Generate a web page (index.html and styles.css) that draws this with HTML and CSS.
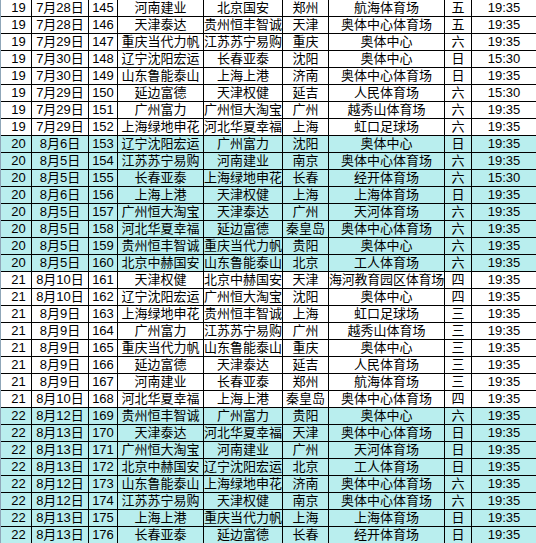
FILE: index.html
```html
<!DOCTYPE html>
<html lang="zh-CN">
<head>
<meta charset="utf-8">
<title>赛程表</title>
<link rel="stylesheet" href="styles.css">
</head>
<body>
<div class="sheet">
  <div class="row"><span class="c1">19</span><span>7月28日</span><span>145</span><span>河南建业</span><span>北京国安</span><span>郑州</span><span>航海体育场</span><span>五</span><span>19:35</span></div>
  <div class="row"><span class="c1">19</span><span>7月28日</span><span>146</span><span>天津泰达</span><span>贵州恒丰智诚</span><span>天津</span><span>奥体中心体育场</span><span>五</span><span>19:35</span></div>
  <div class="row"><span class="c1">19</span><span>7月29日</span><span>147</span><span>重庆当代力帆</span><span>江苏苏宁易购</span><span>重庆</span><span>奥体中心</span><span>六</span><span>19:35</span></div>
  <div class="row"><span class="c1">19</span><span>7月30日</span><span>148</span><span>辽宁沈阳宏运</span><span>长春亚泰</span><span>沈阳</span><span>奥体中心</span><span>日</span><span>15:30</span></div>
  <div class="row"><span class="c1">19</span><span>7月30日</span><span>149</span><span>山东鲁能泰山</span><span>上海上港</span><span>济南</span><span>奥体中心体育场</span><span>日</span><span>19:35</span></div>
  <div class="row"><span class="c1">19</span><span>7月29日</span><span>150</span><span>延边富德</span><span>天津权健</span><span>延吉</span><span>人民体育场</span><span>六</span><span>15:30</span></div>
  <div class="row"><span class="c1">19</span><span>7月29日</span><span>151</span><span>广州富力</span><span>广州恒大淘宝</span><span>广州</span><span>越秀山体育场</span><span>六</span><span>19:35</span></div>
  <div class="row"><span class="c1">19</span><span>7月29日</span><span>152</span><span>上海绿地申花</span><span>河北华夏幸福</span><span>上海</span><span>虹口足球场</span><span>六</span><span>19:35</span></div>
  <div class="row alt"><span class="c1">20</span><span>8月6日</span><span>153</span><span>辽宁沈阳宏运</span><span>广州富力</span><span>沈阳</span><span>奥体中心</span><span>日</span><span>19:35</span></div>
  <div class="row alt"><span class="c1">20</span><span>8月5日</span><span>154</span><span>江苏苏宁易购</span><span>河南建业</span><span>南京</span><span>奥体中心体育场</span><span>六</span><span>19:35</span></div>
  <div class="row alt"><span class="c1">20</span><span>8月5日</span><span>155</span><span>长春亚泰</span><span>上海绿地申花</span><span>长春</span><span>经开体育场</span><span>六</span><span>15:30</span></div>
  <div class="row alt"><span class="c1">20</span><span>8月6日</span><span>156</span><span>上海上港</span><span>天津权健</span><span>上海</span><span>上海体育场</span><span>日</span><span>19:35</span></div>
  <div class="row alt"><span class="c1">20</span><span>8月5日</span><span>157</span><span>广州恒大淘宝</span><span>天津泰达</span><span>广州</span><span>天河体育场</span><span>六</span><span>19:35</span></div>
  <div class="row alt"><span class="c1">20</span><span>8月5日</span><span>158</span><span>河北华夏幸福</span><span>延边富德</span><span>秦皇岛</span><span>奥体中心体育场</span><span>六</span><span>19:35</span></div>
  <div class="row alt"><span class="c1">20</span><span>8月5日</span><span>159</span><span>贵州恒丰智诚</span><span>重庆当代力帆</span><span>贵阳</span><span>奥体中心</span><span>六</span><span>19:35</span></div>
  <div class="row alt"><span class="c1">20</span><span>8月5日</span><span>160</span><span>北京中赫国安</span><span>山东鲁能泰山</span><span>北京</span><span>工人体育场</span><span>六</span><span>19:35</span></div>
  <div class="row"><span class="c1">21</span><span>8月10日</span><span>161</span><span>天津权健</span><span>北京中赫国安</span><span>天津</span><span class="tight">海河教育园区体育场</span><span>四</span><span>19:35</span></div>
  <div class="row"><span class="c1">21</span><span>8月10日</span><span>162</span><span>辽宁沈阳宏运</span><span>广州恒大淘宝</span><span>沈阳</span><span>奥体中心</span><span>四</span><span>19:35</span></div>
  <div class="row"><span class="c1">21</span><span>8月9日</span><span>163</span><span>上海绿地申花</span><span>贵州恒丰智诚</span><span>上海</span><span>虹口足球场</span><span>三</span><span>19:35</span></div>
  <div class="row"><span class="c1">21</span><span>8月9日</span><span>164</span><span>广州富力</span><span>江苏苏宁易购</span><span>广州</span><span>越秀山体育场</span><span>三</span><span>19:35</span></div>
  <div class="row"><span class="c1">21</span><span>8月9日</span><span>165</span><span>重庆当代力帆</span><span>山东鲁能泰山</span><span>重庆</span><span>奥体中心</span><span>三</span><span>19:35</span></div>
  <div class="row"><span class="c1">21</span><span>8月9日</span><span>166</span><span>延边富德</span><span>天津泰达</span><span>延吉</span><span>人民体育场</span><span>三</span><span>19:35</span></div>
  <div class="row"><span class="c1">21</span><span>8月9日</span><span>167</span><span>河南建业</span><span>长春亚泰</span><span>郑州</span><span>航海体育场</span><span>三</span><span>19:35</span></div>
  <div class="row"><span class="c1">21</span><span>8月10日</span><span>168</span><span>河北华夏幸福</span><span>上海上港</span><span>秦皇岛</span><span>奥体中心体育场</span><span>四</span><span>19:35</span></div>
  <div class="row alt"><span class="c1">22</span><span>8月12日</span><span>169</span><span>贵州恒丰智诚</span><span>广州富力</span><span>贵阳</span><span>奥体中心</span><span>六</span><span>19:35</span></div>
  <div class="row alt"><span class="c1">22</span><span>8月13日</span><span>170</span><span>天津泰达</span><span>河北华夏幸福</span><span>天津</span><span>奥体中心体育场</span><span>日</span><span>19:35</span></div>
  <div class="row alt"><span class="c1">22</span><span>8月13日</span><span>171</span><span>广州恒大淘宝</span><span>河南建业</span><span>广州</span><span>天河体育场</span><span>日</span><span>19:35</span></div>
  <div class="row alt"><span class="c1">22</span><span>8月13日</span><span>172</span><span>北京中赫国安</span><span>辽宁沈阳宏运</span><span>北京</span><span>工人体育场</span><span>日</span><span>19:35</span></div>
  <div class="row alt"><span class="c1">22</span><span>8月12日</span><span>173</span><span>山东鲁能泰山</span><span>上海绿地申花</span><span>济南</span><span>奥体中心体育场</span><span>六</span><span>19:35</span></div>
  <div class="row alt"><span class="c1">22</span><span>8月12日</span><span>174</span><span>江苏苏宁易购</span><span>天津权健</span><span>南京</span><span>奥体中心体育场</span><span>六</span><span>19:35</span></div>
  <div class="row alt"><span class="c1">22</span><span>8月13日</span><span>175</span><span>上海上港</span><span>重庆当代力帆</span><span>上海</span><span>上海体育场</span><span>日</span><span>19:35</span></div>
  <div class="row alt"><span class="c1">22</span><span>8月13日</span><span>176</span><span>长春亚泰</span><span>延边富德</span><span>长春</span><span>经开体育场</span><span>日</span><span>19:35</span></div>
</div>
</body>
</html>
```

FILE: styles.css
```css
html, body {
  margin: 0;
  padding: 0;
  background: #ffffff;
}

body {
  width: 536px;
  height: 543px;
  overflow: hidden;
  font-family: "Liberation Sans", "Noto Sans CJK SC", sans-serif;
  font-size: 13px;
  color: #000000;
}

.sheet {
  display: flex;
  flex-direction: column;
  width: 537px;
}

.row {
  display: grid;
  grid-template-columns: 31px 57px 29px 86px 79px 46px 116px 27px 65px;
  height: 17px;
  border-left: 1px solid #8fa6b8;
  background: #ffffff;
}

.row.alt {
  background: #b9eeee;
}

.row > span {
  box-sizing: border-box;
  height: 17px;
  display: flex;
  align-items: center;
  justify-content: center;
  border-right: 1px solid #000000;
  border-bottom: 1px solid #000000;
  white-space: nowrap;
  line-height: 16px;
}

.row > span.c1 {
  padding-left: 5px;
}

.row > span.tight {
  letter-spacing: -0.2px;
}
```
